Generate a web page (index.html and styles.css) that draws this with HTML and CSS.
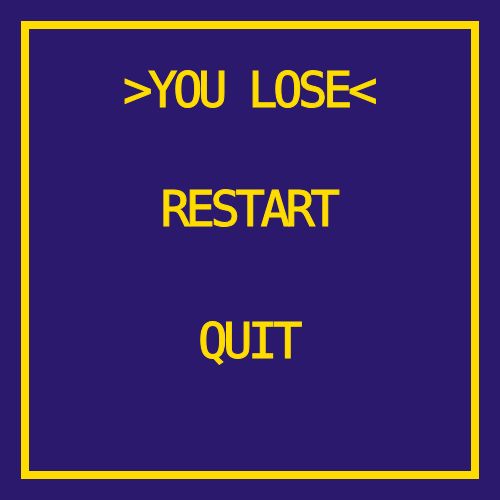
FILE: index.html
```html
<!DOCTYPE html>
<html>
<head>
<meta charset="utf-8">
<link rel="stylesheet" href="styles.css">
</head>
<body>
<div class="frame">
  <div class="title">&gt;YOU LOSE&lt;</div>
  <div class="option restart">RESTART</div>
  <div class="option quit">QUIT</div>
</div>
</body>
</html>
```
FILE: styles.css
```css
html, body {
  margin: 0;
  padding: 0;
  background: #2b196e;
}
.frame {
  box-sizing: border-box;
  width: 458px;
  height: 458px;
  margin: 21px;
  border: 8px solid #ffdc00;
  display: flex;
  flex-direction: column;
  align-items: center;
  padding-top: 37px;
  font-family: "DejaVu Sans Mono", monospace;
  font-weight: normal;
  font-size: 49px;
  line-height: 49px;
  color: #ffdc00;
  -webkit-text-stroke: 1px #ffdc00;
}
.title, .option {
  letter-spacing: -4.5px;
  padding-right: 4px;
  white-space: pre;
}
.restart {
  margin-top: 70px;
}
.quit {
  margin-top: 83px;
}
```
